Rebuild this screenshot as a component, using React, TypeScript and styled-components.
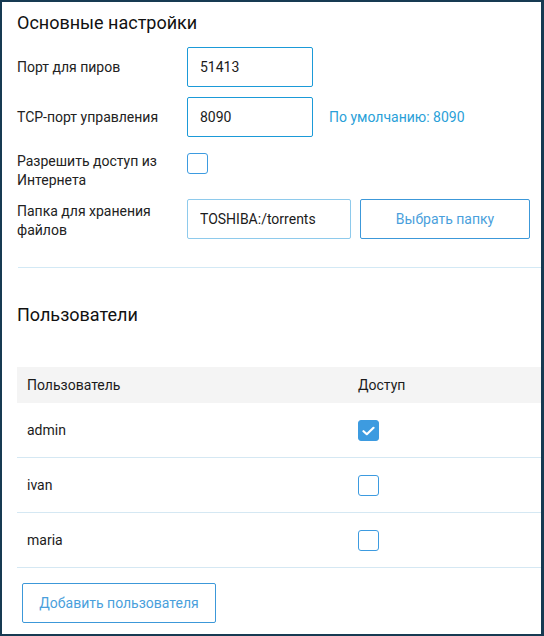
import React, { useState } from 'react';
import styled, { createGlobalStyle } from 'styled-components';

interface User {
  name: string;
  access: boolean;
}

const initialUsers: User[] = [
  { name: 'admin', access: true },
  { name: 'ivan', access: false },
  { name: 'maria', access: false },
];

const App: React.FC = () => {
  const [users, setUsers] = useState<User[]>(initialUsers);
  const [internet, setInternet] = useState(false);

  const toggleUser = (index: number) => {
    setUsers(prev => prev.map((u, i) => (i === index ? { ...u, access: !u.access } : u)));
  };

  return (
    <Frame>
      <GlobalStyle />
      <Content>
        {/* Основные настройки */}
        <Section>
          <Title>Основные настройки</Title>
          <Form>
            <Row>
              <Label>Порт для пиров</Label>
              <Input defaultValue="51413" $width={126} />
            </Row>
            <Row>
              <Label>TCP-порт управления</Label>
              <Input defaultValue="8090" $width={126} />
              <Hint>По умолчанию: 8090</Hint>
            </Row>
            <CheckRow>
              <Label>Разрешить доступ из Интернета</Label>
              <Checkbox $checked={internet} onClick={() => setInternet(!internet)} />
            </CheckRow>
            <Row>
              <Label $offset={4}>Папка для хранения файлов</Label>
              <Input defaultValue="TOSHIBA:/torrents" $width={164} $soft />
              <Button $width={170} $gap={9}>Выбрать папку</Button>
            </Row>
          </Form>
        </Section>

        <Divider />

        {/* Пользователи */}
        <UsersTitle>Пользователи</UsersTitle>
        <Table>
          <HeadRow>
            <Cell>Пользователь</Cell>
            <Cell>Доступ</Cell>
          </HeadRow>
          {users.map((user, index) => (
            <BodyRow key={user.name}>
              <Cell>{user.name}</Cell>
              <Cell>
                <Checkbox $checked={user.access} onClick={() => toggleUser(index)} />
              </Cell>
            </BodyRow>
          ))}
        </Table>
        <Footer>
          <Button $width={194} $gap={0}>Добавить пользователя</Button>
        </Footer>
      </Content>
    </Frame>
  );
};

const Checkbox: React.FC<{ $checked: boolean; onClick: () => void }> = ({ $checked, onClick }) => (
  <CheckBoxBox $checked={$checked} onClick={onClick}>
    {$checked && (
      <svg width="13" height="10" viewBox="0 0 13 10">
        <path d="M1.5 5.2 L4.8 8.2 L11.5 1.8" fill="none" stroke="#fff" strokeWidth="2.2" strokeLinecap="round" strokeLinejoin="round" />
      </svg>
    )}
  </CheckBoxBox>
);

// === STYLED COMPONENTS ===

const GlobalStyle = createGlobalStyle`
  html, body {
    margin: 0;
    padding: 0;
    background: #ffffff;
  }
  body {
    font-family: Roboto, "Liberation Sans", Arial, sans-serif;
    font-size: 14px;
    color: #1b1b1b;
  }
  * {
    box-sizing: border-box;
  }
`;

const Frame = styled.div`
  width: 544px;
  height: 636px;
  border: 2px solid #163a52;
  border-right-width: 3px;
  overflow: hidden;
  background: #ffffff;
`;

const Content = styled.div`
  width: 580px;
  padding-left: 14px;
`;

const Section = styled.div`
  padding-top: 10px;
`;

const Title = styled.h2`
  margin: 0 0 14px 1px;
  font-size: 18px;
  font-weight: 400;
  line-height: 21px;
  color: #111;
`;

const Form = styled.div`
  display: flex;
  flex-direction: column;
  gap: 10px;
  padding-left: 1px;
`;

const Row = styled.div`
  display: flex;
  align-items: center;
  min-height: 40px;
`;

const CheckRow = styled.div`
  display: flex;
  align-items: flex-start;
  height: 41px;
  padding-top: 5px;
`;

const Label = styled.div<{ $offset?: number }>`
  width: 170px;
  flex-shrink: 0;
  padding-right: 24px;
  padding-top: ${props => props.$offset || 0}px;
  font-size: 14px;
  line-height: 19px;
  color: #222;
`;

const Input = styled.input<{ $width: number; $soft?: boolean }>`
  width: ${props => props.$width}px;
  height: 40px;
  padding: 0 12px;
  border: 1px solid ${props => (props.$soft ? '#8ecaec' : '#1b9ad8')};
  border-radius: 2px;
  font-family: inherit;
  font-size: 14px;
  color: #1b1b1b;
  outline: none;
  background: #fff;
`;

const Hint = styled.span`
  margin-left: 16px;
  font-size: 14px;
  color: #2a9fd8;
`;

const Button = styled.button<{ $width: number; $gap: number }>`
  width: ${props => props.$width}px;
  height: 40px;
  margin-left: ${props => props.$gap}px;
  border: 1px solid #3c98d9;
  border-radius: 2px;
  background: #fff;
  font-family: inherit;
  font-size: 14px;
  color: #4a9fdc;
  cursor: pointer;
`;

const CheckBoxBox = styled.div<{ $checked: boolean }>`
  width: 21px;
  height: 21px;
  margin-top: 1px;
  border: 1.5px solid #3d9be0;
  border-radius: 3px;
  background: ${props => (props.$checked ? '#3d9be0' : '#fff')};
  display: flex;
  align-items: center;
  justify-content: center;
  cursor: pointer;
`;

const Divider = styled.div`
  height: 1px;
  margin-top: 27px;
  margin-left: 2px;
  background: #d3e9f5;
`;

const UsersTitle = styled.h2`
  margin: 36px 0 42px 1px;
  font-size: 18px;
  font-weight: 400;
  line-height: 21px;
  color: #111;
`;

const Table = styled.div`
  margin-left: 1px;
  display: flex;
  flex-direction: column;
`;

const HeadRow = styled.div`
  display: grid;
  grid-template-columns: 331px 1fr;
  height: 36px;
  align-items: center;
  background: #f4f4f4;
  color: #1b1b1b;
`;

const BodyRow = styled.div`
  display: grid;
  grid-template-columns: 331px 1fr;
  height: 55px;
  align-items: center;
  border-bottom: 1px solid #d5e8f3;
`;

const Cell = styled.div`
  padding: 0 10px;
  font-size: 14px;
  color: #1b1b1b;
  display: flex;
  align-items: center;
`;

const Footer = styled.div`
  padding: 15px 0 0 6px;
`;

export default App;
